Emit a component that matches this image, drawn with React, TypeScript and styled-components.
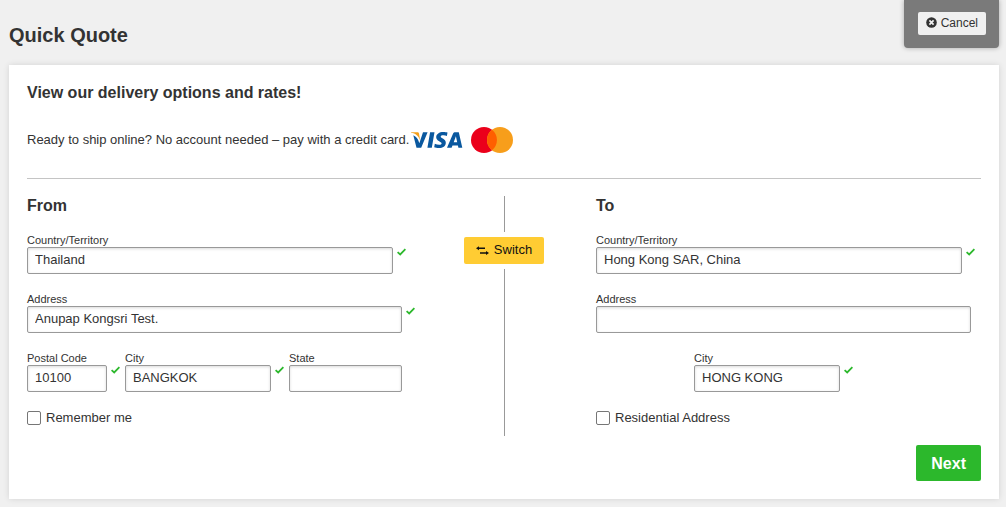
import React, { useId } from "react";
import styled, { createGlobalStyle } from "styled-components";

const GlobalStyle = createGlobalStyle`
  *, *::before, *::after { box-sizing: border-box; }
  body {
    margin: 0;
    background: #f0f0f0;
    color: #333;
    font-family: "Liberation Sans", Arial, sans-serif;
    font-size: 13px;
    line-height: 18px;
  }
  button, input { font: inherit; color: inherit; }
  h1, h2, h3, p { margin: 0; }
`;

const Page = styled.div`
  padding: 0 7px 8px 9px;
`;

const Header = styled.header`
  display: flex;
  justify-content: space-between;
  align-items: flex-start;
  height: 65px;
`;

const Title = styled.h1`
  padding-top: 23px;
  font-size: 20px;
  line-height: 24px;
`;

const CancelTab = styled.div`
  padding: 12px 13px 13px 14px;
  background: #7a7a7a;
  border-radius: 0 0 4px 4px;
  box-shadow: 0 0 5px rgba(0, 0, 0, 0.3);
`;

const CancelButton = styled.button`
  display: flex;
  align-items: center;
  gap: 4px;
  height: 23px;
  padding: 0 8px 2px;
  border: 0;
  border-radius: 2px;
  background: #f0f0f0;
  font-size: 12px;
`;

const Card = styled.main`
  padding: 18px;
  background: #fff;
  box-shadow: 0 0 6px rgba(0, 0, 0, 0.12);
`;

const Heading = styled.h2`
  font-size: 16px;
  line-height: 20px;
`;

const Intro = styled.p`
  display: flex;
  align-items: center;
  margin-top: 23px;
  padding-bottom: 25px;
  border-bottom: 1px solid #c4c4c4;
`;

const Logos = styled.span`
  display: flex;
  align-items: center;
  gap: 8px;
  padding: 1px 0 0 2px;
`;

const Columns = styled.div`
  display: grid;
  grid-template-columns: 1fr 184px 1fr;
  margin-top: 17px;
`;

const Side = styled.section`
  padding: 0 10px 9px 0;
`;

const Fields = styled.div`
  display: grid;
  grid-template-columns: 80fr 146fr 113fr;
  gap: 18px;
  margin-top: 17px;
`;

const FieldBox = styled.div<{ $column: string; $inset?: boolean }>`
  grid-column: ${(p) => p.$column};
  margin-right: ${(p) => (p.$inset ? "9px" : "0")};
`;

const Label = styled.label`
  display: block;
  font-size: 11px;
  line-height: 14px;
`;

const Control = styled.div`
  position: relative;
`;

const TextInput = styled.input`
  display: block;
  width: 100%;
  height: 27px;
  padding: 0 7px 3px;
  border: 1px solid #999;
  border-radius: 2px;
  background: #fff;
  box-shadow: inset 0 1px 3px rgba(0, 0, 0, 0.15);
`;

const ValidMark = styled.svg`
  position: absolute;
  top: 1px;
  left: calc(100% + 4px);
`;

const CheckRow = styled.label`
  display: flex;
  align-items: center;
  gap: 5px;
  margin-top: 17px;
`;

const CheckBox = styled.input`
  appearance: none;
  width: 14px;
  height: 14px;
  margin: 0;
  border: 1px solid #767676;
  border-radius: 2px;
  background: #fff;

  &:checked {
    background: #2cb82c;
  }
`;

const Divider = styled.div`
  display: flex;
  flex-direction: column;
  align-items: center;
  gap: 5px;
`;

const Line = styled.div<{ $grow?: boolean }>`
  width: 1px;
  background: #999;
  ${(p) => (p.$grow ? "flex: 1;" : "height: 36px;")}
`;

const SwitchButton = styled.button`
  display: flex;
  align-items: center;
  gap: 5px;
  height: 27px;
  padding: 0 12px 1px;
  border: 0;
  border-radius: 2px;
  background: #ffcc33;
  color: #111;
`;

const Actions = styled.div`
  display: flex;
  justify-content: flex-end;
  margin-top: 9px;
`;

const NextButton = styled.button`
  height: 36px;
  padding: 1px 15px 0;
  border: 0;
  border-radius: 2px;
  background: #2cb82c;
  color: #fff;
  font-size: 16px;
  font-weight: bold;
`;

function CancelIcon() {
  return (
    <svg width="11" height="11" viewBox="0 0 11 11" aria-hidden="true">
      <circle cx="5.5" cy="5.5" r="5.3" fill="#333" />
      <path d="M3.4 3.4l4.2 4.2M7.6 3.4L3.4 7.6" stroke="#f0f0f0" strokeWidth="1.7" />
    </svg>
  );
}

function SwitchIcon() {
  return (
    <svg width="13" height="11" viewBox="0 0 13 11" aria-hidden="true">
      <path d="M0 3.2L3 1.2V2.5H9V3.9H3V5.2zM13 8L10 6V7.3H4V8.7H10V10z" fill="#111" />
    </svg>
  );
}

function VisaLogo() {
  return (
    <svg width="52" height="18" viewBox="0 0 52 18" role="img" aria-label="Visa">
      <path fill="#0a589f" d="M23.5 1.2L20.8 16.8H16.4L19.1 1.2zM16.6 1.2L10.2 16.8H5.5L2.3 4.3C5.3 5.6 7.1 8 7.8 10.8L8.3 12.2L12 1.2zM36.5 1.6L35.9 5C34.7 4.5 33.8 4.3 32.5 4.3C30.9 4.3 29.7 4.8 29.7 5.7C29.7 7.3 34.8 7.5 34.8 11.7C34.8 15.1 31.8 17 28 17C26 17 24.3 16.7 23.2 16.2L23.8 12.7C25.2 13.4 26.7 13.8 28.2 13.8C29.6 13.8 30.6 13.3 30.6 12.3C30.6 10.6 25.2 10.1 25.2 6.2C25.2 3 28.4 1 32.2 1C34 1 35.5 1.2 36.5 1.6zM47.8 1.2L51.3 16.8H47.4L46.9 14.4H41.5L40.6 16.8H36L42.1 2.6C42.5 1.6 43.2 1.2 44.2 1.2zM44.9 5.3L42.7 11.3H46.2z" />
      <path fill="#f5a11c" d="M0 1.2H6.3C7.3 1.2 7.8 1.6 8 2.5L9.2 9.6C7.6 5 4.8 2.5 0 1.8z" />
    </svg>
  );
}

function MastercardLogo() {
  return (
    <svg width="42" height="26" viewBox="0 0 42 26" role="img" aria-label="Mastercard">
      <circle cx="13" cy="13" r="13" fill="#eb001b" />
      <circle cx="29" cy="13" r="13" fill="#f79e1b" />
      <path d="M21 2.8a13 13 0 0 1 0 20.4a13 13 0 0 1 0-20.4z" fill="#ff5f00" />
    </svg>
  );
}

type FieldProps = {
  label: string;
  value?: string;
  column: string;
  inset?: boolean;
  valid?: boolean;
};

function Field({ label, value = "", column, inset, valid }: FieldProps) {
  const id = useId();
  return (
    <FieldBox $column={column} $inset={inset}>
      <Label htmlFor={id}>{label}</Label>
      <Control>
        <TextInput id={id} type="text" defaultValue={value} />
        {valid && (
          <ValidMark width="9" height="8" viewBox="0 0 9 8" aria-hidden="true">
            <path d="M.6 4.1L3.2 6.4L8.4 1.2" fill="none" stroke="#2cb82c" strokeWidth="1.8" />
          </ValidMark>
        )}
      </Control>
    </FieldBox>
  );
}

export default function App() {
  return (
    <>
      <GlobalStyle />
      <Page>
        <Header>
          <Title>Quick Quote</Title>
          <CancelTab>
            <CancelButton type="button">
              <CancelIcon />
              Cancel
            </CancelButton>
          </CancelTab>
        </Header>
        <Card>
          <Heading>View our delivery options and rates!</Heading>
          <Intro>
            Ready to ship online? No account needed – pay with a credit card.
            <Logos>
              <VisaLogo />
              <MastercardLogo />
            </Logos>
          </Intro>
          <Columns>
            <Side>
              <Heading as="h3">From</Heading>
              <Fields>
                <Field label="Country/Territory" value="Thailand" column="1 / -1" inset valid />
                <Field label="Address" value="Anupap Kongsri Test." column="1 / -1" valid />
                <Field label="Postal Code" value="10100" column="1" valid />
                <Field label="City" value="BANGKOK" column="2" valid />
                <Field label="State" column="3" />
              </Fields>
              <CheckRow>
                <CheckBox type="checkbox" />
                Remember me
              </CheckRow>
            </Side>
            <Divider>
              <Line />
              <SwitchButton type="button">
                <SwitchIcon />
                Switch
              </SwitchButton>
              <Line $grow />
            </Divider>
            <Side>
              <Heading as="h3">To</Heading>
              <Fields>
                <Field label="Country/Territory" value="Hong Kong SAR, China" column="1 / -1" inset valid />
                <Field label="Address" column="1 / -1" />
                <Field label="City" value="HONG KONG" column="2" valid />
              </Fields>
              <CheckRow>
                <CheckBox type="checkbox" />
                Residential Address
              </CheckRow>
            </Side>
          </Columns>
          <Actions>
            <NextButton type="button">Next</NextButton>
          </Actions>
        </Card>
      </Page>
    </>
  );
}
